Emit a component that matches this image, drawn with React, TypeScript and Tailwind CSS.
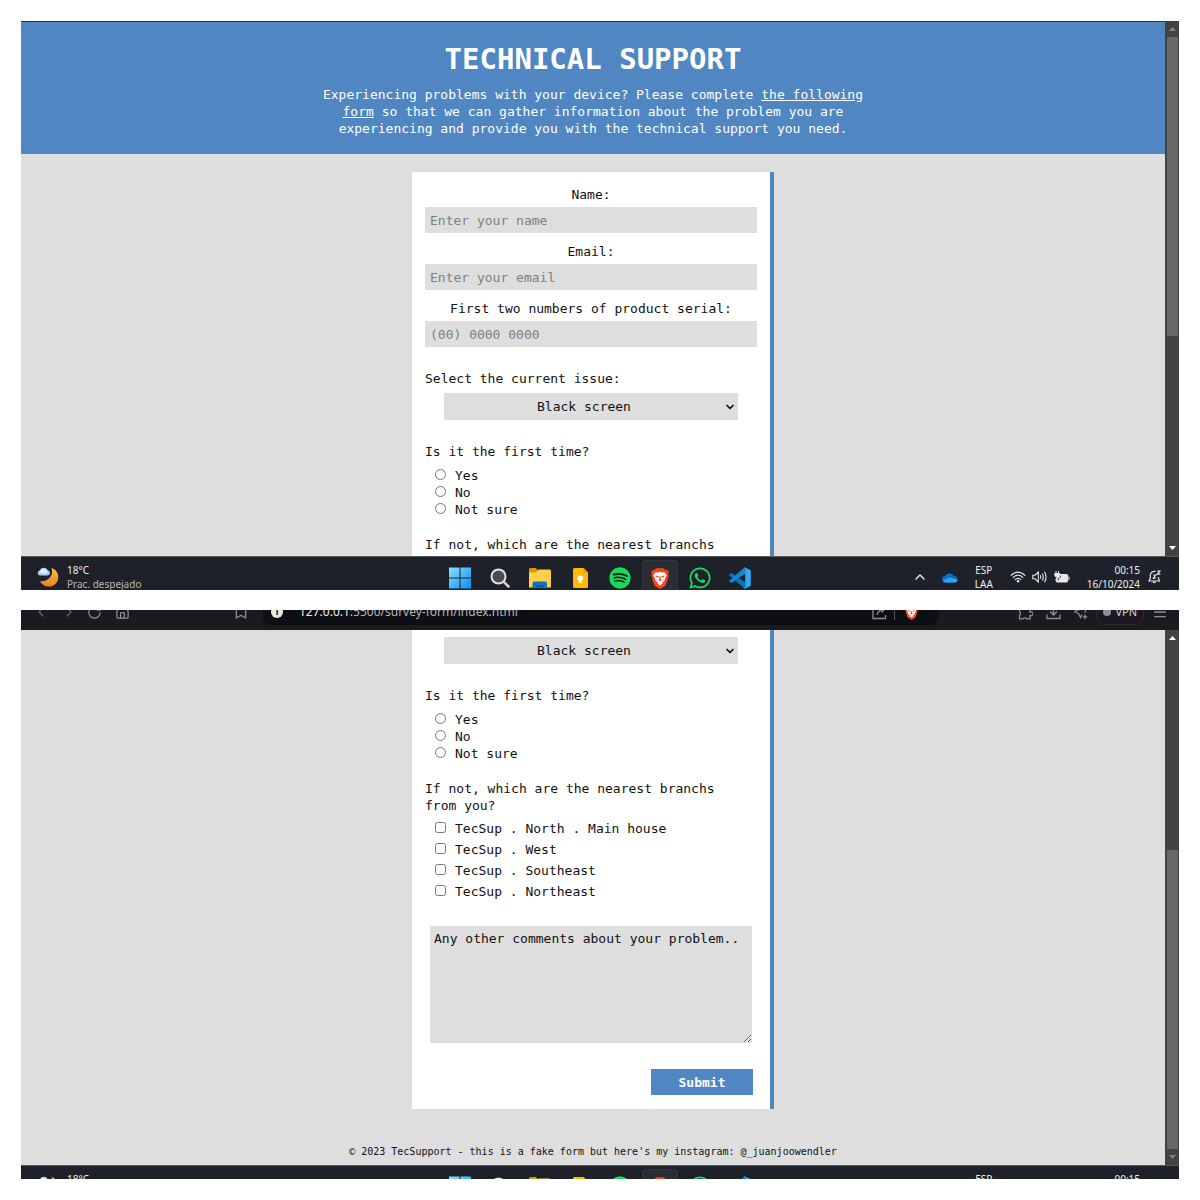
import { useId } from "react";
import type { ReactNode } from "react";
import { FaSpotify, FaWhatsapp } from "react-icons/fa";
import { Bookmark, ChevronDown, ChevronLeft, ChevronRight, ChevronUp, House, Menu, RotateCw } from "lucide-react";

/* ---------- form page ---------- */

function PageHeader() {
  return (
    <header className="border-t border-[#21374f] bg-[#5086c2] px-4 pt-5 pb-[17px] text-center text-white">
      <h1 className="text-[29px] leading-[34px] font-bold">TECHNICAL SUPPORT</h1>
      <p className="mx-auto mt-[10px] max-w-[556px]">
        Experiencing problems with your device? Please complete{" "}
        <a href="#form" className="underline">
          the following form
        </a>{" "}
        so that we can gather information about the problem you are experiencing and provide you with the technical
        support you need.
      </p>
    </header>
  );
}

function TextField({ label, placeholder, type }: { label: string; placeholder: string; type: string }) {
  const id = useId();
  return (
    <div className="flex flex-col gap-1">
      <label htmlFor={id} className="text-center">
        {label}
      </label>
      <input
        id={id}
        type={type}
        placeholder={placeholder}
        className="h-[26px] w-full bg-[#dedede] px-[5px] placeholder:text-[#808080]"
      />
    </div>
  );
}

function ContactFields() {
  return (
    <div className="mb-[23px] flex flex-col gap-[10px]">
      <TextField label="Name:" placeholder="Enter your name" type="text" />
      <TextField label="Email:" placeholder="Enter your email" type="email" />
      <TextField label="First two numbers of product serial:" placeholder="(00) 0000 0000" type="tel" />
    </div>
  );
}

function IssueSelect({ id, label }: { id?: string; label?: string }) {
  return (
    <div className="relative mx-[19px]">
      <select id={id} aria-label={label} className="h-[27px] w-full appearance-none bg-[#dedede] pr-[14px] text-center">
        <option>Black screen</option>
        <option>No power</option>
        <option>Other</option>
      </select>
      <ChevronDown className="pointer-events-none absolute top-2 right-[2px] size-3" strokeWidth={3.5} />
    </div>
  );
}

function IssueField() {
  const id = useId();
  return (
    <div className="flex flex-col gap-[6px]">
      <label htmlFor={id}>Select the current issue:</label>
      <IssueSelect id={id} />
    </div>
  );
}

function FirstTime() {
  const name = useId();
  return (
    <fieldset className="mt-[23px]">
      <legend className="mb-[7px]">Is it the first time?</legend>
      <div className="pl-[10px]">
        {["Yes", "No", "Not sure"].map((t) => (
          <label key={t} className="flex gap-[9px]">
            <input type="radio" name={name} className="mt-[2px] size-[11px]" />
            {t}
          </label>
        ))}
      </div>
    </fieldset>
  );
}

const branchQuestion = "If not, which are the nearest branchs from you?";
const branches = ["TecSup . North . Main house", "TecSup . West", "TecSup . Southeast", "TecSup . Northeast"];

function Branches() {
  return (
    <fieldset className="mt-[18px]">
      <legend className="mb-[6px] pr-5">{branchQuestion}</legend>
      <div className="flex flex-col gap-1 pl-[10px]">
        {branches.map((b) => (
          <label key={b} className="flex gap-[9px]">
            <input type="checkbox" className="mt-[2px] size-[11px]" />
            {b}
          </label>
        ))}
      </div>
    </fieldset>
  );
}

function Card({ children, className }: { children: ReactNode; className: string }) {
  return (
    <form
      onSubmit={(e) => e.preventDefault()}
      className={`mx-auto w-full max-w-[362px] border-r-4 border-[#5086c2] bg-white px-[13px] ${className}`}
    >
      {children}
    </form>
  );
}

function Scrollbar({ atTop }: { atTop: boolean }) {
  const thumb = <div className="mr-px ml-[2px] flex-[300] bg-[#686868]" />;
  const rest = <div className="flex-[204]" />;
  return (
    <div className="flex w-[14px] shrink-0 flex-col bg-[#424242]">
      <div className="flex h-4 items-center justify-center">
        <svg viewBox="0 0 7 4" className={atTop ? "h-1 w-[7px] fill-[#858585]" : "h-1 w-[7px] fill-white"}>
          <path d="M3.5 0L7 4H0z" />
        </svg>
      </div>
      {atTop ? thumb : rest}
      {atTop ? rest : thumb}
      <div className="flex h-4 items-center justify-center">
        <svg viewBox="0 0 7 4" className={atTop ? "h-1 w-[7px] fill-white" : "h-1 w-[7px] fill-[#858585]"}>
          <path d="M3.5 4L7 0H0z" />
        </svg>
      </div>
    </div>
  );
}

function Viewport({ atTop, children }: { atTop: boolean; children: ReactNode }) {
  return (
    <div className="flex min-h-0 flex-1">
      <main className="min-w-0 flex-1 overflow-hidden bg-[#dedede] font-['DejaVu_Sans_Mono',monospace] text-[13px] leading-[17px] text-[#111]">
        {children}
      </main>
      <Scrollbar atTop={atTop} />
    </div>
  );
}

/* ---------- taskbar ---------- */

function WeatherIcon() {
  return (
    <svg viewBox="0 0 22 20" className="h-5 w-[22px]">
      <defs>
        <linearGradient id="moon" x1="0" y1="0" x2="0" y2="1">
          <stop offset="0" stopColor="#fbc04a" />
          <stop offset="1" stopColor="#f07f1c" />
        </linearGradient>
      </defs>
      <path
        d="M14.5 1C19 2.600 21.500 6.300 21.300 10.500C21 15.800 17 19.600 12 19.600C7.800 19.600 4.500 17.500 2.800 14C9.500 15.500 17.500 9.500 14.500 1Z"
        fill="url(#moon)"
      />
      <path d="M2.800 8.600a2.800 2.800 0 0 1 0-5.400a4.600 4.600 0 0 1 8 0a2.800 2.800 0 0 1 .2 5.400z" fill="#a9cdfa" />
      <path d="M3 6a4 4 0 0 1 7.500-2a4 4 0 0 1-1 2.500z" fill="#e2efff" />
    </svg>
  );
}

function WindowsIcon() {
  return (
    <svg viewBox="0 0 22 22" className="size-[22px]">
      <defs>
        <linearGradient id="win" x1="0" y1="0" x2="1" y2="1">
          <stop offset="0" stopColor="#86e2ff" />
          <stop offset="1" stopColor="#0a8cf5" />
        </linearGradient>
      </defs>
      <path d="M0 .5h10.500v10H0zM11.500 .5H22v10H11.500zM0 11.500h10.500v10H0zM11.500 11.500H22v10H11.500z" fill="url(#win)" />
    </svg>
  );
}

function SearchIcon() {
  return (
    <svg viewBox="0 0 20 20" className="size-5" fill="none">
      <circle cx="8.500" cy="8.500" r="7" fill="#4b4c53" stroke="#e3e3e5" strokeWidth="2" />
      <path d="M13.800 13.800L18.500 18.500" stroke="#d2d2d4" strokeWidth="2.600" strokeLinecap="round" />
    </svg>
  );
}

function FolderIcon() {
  return (
    <svg viewBox="0 0 22 20" className="h-5 w-[22px]">
      <path d="M0 1.500Q0 0 1.500 0H7L9 2.500V8H0z" fill="#d99a07" />
      <path d="M0 4.500H7L9.500 1.500H20.500Q22 1.500 22 3V19.500H0z" fill="#fdcf4a" />
      <path d="M3.500 19.500V15.500Q3.500 13.500 5.500 13.500H16Q18 13.500 18 15.500V19.500z" fill="#1172c4" />
      <path d="M6.500 19.500V18.500Q6.500 17.500 7.500 17.500H14Q15 17.500 15 18.500V19.500z" fill="#075596" />
    </svg>
  );
}

function NotesIcon() {
  return (
    <svg viewBox="0 0 15 20" className="h-5 w-[15px]">
      <path d="M1.500 0H10.500L15 4.500V18.500Q15 20 13.500 20H1.500Q0 20 0 18.500V1.500Q0 0 1.500 0z" fill="#ffba00" />
      <path d="M10.500 0L15 4.500H10.500z" fill="#f29a00" />
      <circle cx="7.300" cy="10.300" r="2.900" fill="#fff" />
      <path d="M5.800 12h3v3h-3z" fill="#fff1c6" />
    </svg>
  );
}

function CodeIcon() {
  return (
    <svg viewBox="0 0 22 22" className="size-[22px]">
      <path d="M1.800 6.200L.4 7.400V8.600L15.500 21.400L16.500 15.500L3 6.200z" fill="#0a75ba" />
      <path d="M1.800 15.800L.4 14.600V13.400L15.500 .6L16.500 6.500L3 15.800z" fill="#1389d2" />
      <path d="M15.800 .4L21 2.800Q21.800 3.200 21.800 4V18Q21.800 18.800 21 19.200L15.800 21.600Q14.800 21.800 14.500 21L16.200 20V2L14.500 1Q14.800 .2 15.800 .4z" fill="#30a8f2" />
    </svg>
  );
}

function BraveIcon({ small }: { small?: boolean }) {
  return (
    <svg viewBox="0 0 18 21" className={small ? "h-[15px] w-[13px]" : "h-[21px] w-[18px]"}>
      <path d="M5.200 .3H12.800L14.500 2.200L16.500 2L17.800 4.500L17.200 6.200L17.600 7.500L15.200 16Q14.800 17.300 13.500 18.200L9 21L4.500 18.200Q3.200 17.300 2.800 16L.4 7.500L.8 6.200L.2 4.500L1.500 2L3.500 2.200z" fill="#f9451d" />
      <path d="M4.500 4.200L7 4.600L9 4L11 4.600L13.500 4.200L15.600 7.400L14.400 9.500L13.600 12.600L11.200 14.400L11.500 15.600L9 17.500L6.500 15.600L6.800 14.400L4.400 12.600L3.600 9.500L2.400 7.400z" fill="#fff" />
      <path d="M4.600 7.400L7.700 8.200L7.200 9.600L5.200 8.900zM13.400 7.400L10.300 8.200L10.800 9.600L12.800 8.900zM8.200 8.600H9.800L9.600 11.200L10.800 12L9 13.200L7.200 12L8.400 11.200zM5 10.500L6.600 12.600L6.200 13zM13 10.500L11.400 12.600L11.800 13z" fill="#f9451d" />
    </svg>
  );
}

function CloudIcon() {
  return (
    <svg viewBox="0 0 16 11" className="h-[11px] w-4">
      <path d="M3.500 10.500a3.200 3.200 0 0 1-.5-6.400A5 5 0 0 1 12 4a3.200 3.200 0 0 1 .5 6.500z" fill="#0f6cc4" />
      <path d="M3.500 10.500a3 3 0 0 1-2.500-2L7.500 5.500L15.500 7.500a3 3 0 0 1-3 3z" fill="#2ea7ee" />
    </svg>
  );
}

function WifiIcon() {
  return (
    <svg viewBox="0 0 16 12" className="h-3 w-4" fill="none" stroke="#e8e8e8" strokeWidth="1.200">
      <path d="M.8 4.600Q8-2.500 15.200 4.600M2.800 6.800Q8 1.500 13.200 6.800M4.900 8.900Q8 5.800 11.100 8.900" />
      <circle cx="8" cy="10.300" r="1.200" fill="#e8e8e8" stroke="none" />
    </svg>
  );
}

function SoundIcon() {
  return (
    <svg viewBox="0 0 16 12" className="h-3 w-4" fill="none" stroke="#e8e8e8" strokeWidth="1.100">
      <path d="M.8 4.200H3L6.300 1V11L3 7.800H.8z" />
      <path d="M8.300 4.200Q9.300 6 8.300 7.800M10.300 2.500Q12.300 6 10.300 9.500M12.500 .8Q15.600 6 12.500 11.200" />
    </svg>
  );
}

function BatteryIcon() {
  return (
    <svg viewBox="0 0 16 12" className="h-3 w-4">
      <path d="M5 3.500H12.500Q13.800 3.500 13.800 4.800V9.700Q13.800 11 12.500 11H3.300Q2 11 2 9.700V7.500" fill="#e8e8e8" stroke="#e8e8e8" />
      <path d="M14.500 5.800h1v3h-1z" fill="#e8e8e8" />
      <path d="M2 0V2.500M4.500 0V2.500M.8 2.500H5.700V4.500Q5.500 6 3.300 6.200Q1 6 .8 4.500zM3.300 6V9" fill="#e8e8e8" stroke="#e8e8e8" />
      <path d="M6.500 4.500V6Q5.500 7.600 4.300 7.500V9.500" fill="none" stroke="#1f212a" strokeWidth=".8" />
    </svg>
  );
}

function BellIcon() {
  return (
    <svg viewBox="0 0 13 14" className="h-[14px] w-[13px]" fill="none" stroke="#e8e8e8" strokeWidth="1.200">
      <path d="M7.500 1.500Q2.500 1 2.300 5.500V8.500L1 11H11.500L10.500 8.500V7" />
      <path d="M5 11.500Q6.200 14 7.500 11.500M9 1h3L9.300 4.200h3M5.300 5h2.500L5.300 8.200h2.500" />
    </svg>
  );
}

function AppButton({ name, active, children }: { name: string; active?: boolean; children: ReactNode }) {
  return (
    <button type="button" aria-label={name} className="flex w-10 items-center justify-center">
      <span
        className={
          active
            ? "flex h-9 w-9 items-center justify-center rounded border border-[#34363d] bg-[#2b2d35]"
            : "flex h-9 w-9 items-center justify-center"
        }
      >
        {children}
      </span>
    </button>
  );
}

function Taskbar({ className }: { className: string }) {
  return (
    <footer className={`shrink-0 overflow-hidden border-t border-[#55565a] bg-[#1f212a] ${className}`}>
      <div className="grid h-[42px] grid-cols-[1fr_auto_1fr] items-center font-['Noto_Sans',sans-serif] text-[10px] leading-[14px] text-[#ededed]">
        <div className="flex items-center gap-2 pb-[2px] pl-4">
          <WeatherIcon />
          <div>
            <div>18°C</div>
            <div className="text-[#b5b5b8]">Prac. despejado</div>
          </div>
        </div>
        <nav className="flex">
          <AppButton name="Start">
            <WindowsIcon />
          </AppButton>
          <AppButton name="Search">
            <SearchIcon />
          </AppButton>
          <AppButton name="Files">
            <FolderIcon />
          </AppButton>
          <AppButton name="Notes">
            <NotesIcon />
          </AppButton>
          <AppButton name="Spotify">
            <FaSpotify className="size-[22px] rounded-full bg-[#0d2c18] text-[#1ed760]" />
          </AppButton>
          <AppButton name="Brave" active>
            <BraveIcon />
          </AppButton>
          <AppButton name="WhatsApp">
            <FaWhatsapp className="size-6 text-[#25d366]" />
          </AppButton>
          <AppButton name="Code editor">
            <CodeIcon />
          </AppButton>
        </nav>
        <div className="flex items-center justify-end pr-[18px] pb-[2px]">
          <ChevronUp className="mr-[14px] size-4" />
          <CloudIcon />
          <div className="mx-[17px] text-center">
            <div>ESP</div>
            <div>LAA</div>
          </div>
          <div className="mr-[17px] flex items-center gap-[6px]">
            <WifiIcon />
            <SoundIcon />
            <BatteryIcon />
          </div>
          <div className="mr-2 text-right">
            <div>00:15</div>
            <div>16/10/2024</div>
          </div>
          <BellIcon />
        </div>
      </div>
    </footer>
  );
}

/* ---------- browser toolbar ---------- */

function ShareIcon() {
  return (
    <svg viewBox="0 0 15 15" className="mr-[7px] ml-auto size-[15px]" fill="none" stroke="currentColor" strokeWidth="1.300">
      <path d="M5 2H1V13.500H13.500V10M5 10Q5.500 5 12 4.500M9.500 1.500L12.500 4.500L9.500 7.500" />
    </svg>
  );
}

function PuzzleIcon() {
  return (
    <svg viewBox="0 0 15 15" className="mr-[13px] size-[15px]" fill="none" stroke="currentColor" strokeWidth="1.300">
      <path d="M1.500 3.500H5A2 2 0 1 1 8.500 3.500H12V7A2 2 0 1 1 12 10.500V13.800H8.500A2 1.800 0 0 0 5 13.800H1.500V10.500A2 2 0 0 0 1.500 7z" />
    </svg>
  );
}

function DownloadIcon() {
  return (
    <svg viewBox="0 0 15 15" className="mr-[12px] size-[15px]" fill="none" stroke="currentColor" strokeWidth="1.300">
      <path d="M7.500 0V9.500M4 6.500L7.500 10L11 6.500M1 9.500V13.500H14V9.500" />
    </svg>
  );
}

function AssistantIcon() {
  return (
    <svg viewBox="0 0 15 15" className="mr-2 size-[15px]" fill="none" stroke="currentColor" strokeWidth="1.300">
      <path d="M1 6.500L13.500 2L12 7.500M1 6.500L5.500 8.500L7.500 12.500L9 9.500M12 9.500V14M9.800 11.800H14.300" />
    </svg>
  );
}

function Toolbar() {
  return (
    <div className="flex h-5 shrink-0 flex-col justify-end overflow-hidden bg-[#1c1a20]">
      <div className="flex h-9 shrink-0 items-center font-['Noto_Sans',sans-serif] text-[#8d8d91]">
        <div className="flex w-[242px] shrink-0 items-center pl-[12px]">
          <ChevronLeft className="mr-3 size-4 text-[#65656a]" strokeWidth={1.8} />
          <ChevronRight className="mr-[10px] size-4 text-[#65656a]" strokeWidth={1.8} />
          <RotateCw className="mr-[13px] size-[15px]" />
          <House className="size-[15px]" />
          <Bookmark className="mr-[14px] ml-auto size-4" />
        </div>
        <div className="flex h-[26px] flex-1 items-center rounded-lg bg-[#0d0f14] pr-[20px] pl-[8px]">
          <span className="flex size-3 items-center justify-center rounded-full bg-[#e8e8e8] text-[9px] font-bold text-[#0d0f14]">
            i
          </span>
          <span className="ml-4 text-[12px] leading-4 text-[#b4b4b8]">
            <span className="text-[#ededed]">127.0.0.1</span>:5500/survey-form/index.html
          </span>
          <ShareIcon />
          <span className="mr-[10px] h-4 w-px bg-[#55555a]" />
          <BraveIcon small />
        </div>
        <div className="flex w-[241px] shrink-0 items-center justify-end pr-[11px]">
          <PuzzleIcon />
          <DownloadIcon />
          <AssistantIcon />
          <button
            type="button"
            className="mr-2 flex h-[26px] items-center gap-1 rounded-lg border border-[#2b2a31] px-[6px] text-[11px] text-[#d0d0d4]"
          >
            <span className="size-2 rounded-full bg-[#8a8fa6]" />
            VPN
          </button>
          <Menu className="size-4" />
        </div>
      </div>
    </div>
  );
}

/* ---------- page ---------- */

export default function App() {
  return (
    <div className="grid h-screen grid-rows-2 gap-5 bg-white p-[21px]">
      <section className="flex min-h-0 flex-col overflow-hidden">
        <Viewport atTop>
          <PageHeader />
          <Card className="mt-[18px] pt-[14px]">
            <ContactFields />
            <IssueField />
            <FirstTime />
            <p className="mt-[18px] pr-5">{branchQuestion}</p>
          </Card>
        </Viewport>
        <Taskbar className="h-[34px]" />
      </section>

      <section className="flex min-h-0 flex-col overflow-hidden">
        <Toolbar />
        <Viewport atTop={false}>
          <Card className="pt-[7px] pb-[14px]">
            <IssueSelect label="Current issue" />
            <FirstTime />
            <Branches />
            <div className="mt-[26px] px-[5px]">
              <textarea
                aria-label="Comments"
                defaultValue="Any other comments about your problem.."
                className="block h-[117px] w-full bg-[#dedede] p-1"
              />
            </div>
            <div className="mt-[26px] flex justify-end pr-1">
              <button type="submit" className="h-[26px] w-[102px] bg-[#5086c2] font-bold text-white">
                Submit
              </button>
            </div>
          </Card>
          <p className="mt-[37px] text-center text-[10px] leading-3">
            © 2023 TecSupport - this is a fake form but here's my instagram:{" "}
            <a href="#instagram">@_juanjoowendler</a>
          </p>
        </Viewport>
        <Taskbar className="h-[14px]" />
      </section>
    </div>
  );
}
